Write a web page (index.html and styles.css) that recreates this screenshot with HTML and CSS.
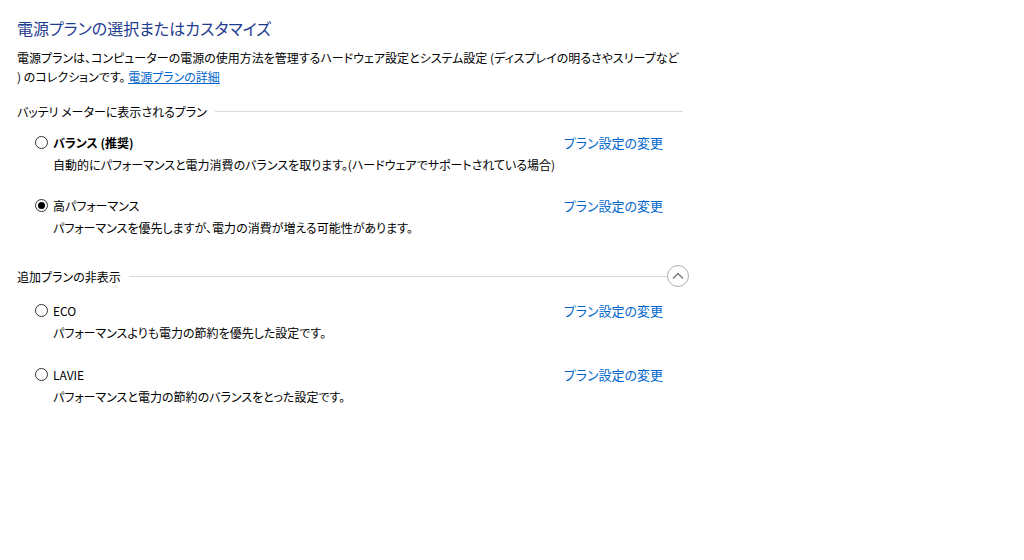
FILE: index.html
```html
<!DOCTYPE html>
<html lang="ja">
<head>
  <meta charset="UTF-8" />
  <title>電源オプション</title>
  <link rel="stylesheet" href="styles.css">
</head>
<body>
<div class="wrap">
  <h1 class="title">電源プランの選択またはカスタマイズ</h1>
  <p class="intro">電源プランは、コンピューターの電源の使用方法を管理するハードウェア設定とシステム設定 (ディスプレイの明るさやスリープなど<br />) のコレクションです。 <a class="link" href="#">電源プランの詳細</a></p>

  <div class="group">
    <div class="group-head"><span>バッテリ メーターに表示されるプラン</span><i class="rule"></i></div>
    <div class="plan">
      <div class="plan-row">
        <span class="radio"></span>
        <span class="plan-name bold">バランス (推奨)</span>
        <a class="link change" href="#">プラン設定の変更</a>
      </div>
      <div class="plan-desc">自動的にパフォーマンスと電力消費のバランスを取ります。(ハードウェアでサポートされている場合)</div>
    </div>
    <div class="plan">
      <div class="plan-row">
        <span class="radio on"></span>
        <span class="plan-name">高パフォーマンス</span>
        <a class="link change" href="#">プラン設定の変更</a>
      </div>
      <div class="plan-desc">パフォーマンスを優先しますが、電力の消費が増える可能性があります。</div>
    </div>
  </div>

  <div class="group extra">
    <div class="group-head"><span>追加プランの非表示</span><i class="rule"></i><span class="toggle"><svg width="12" height="8" viewBox="0 0 12 8"><path d="M1 6.5 6 1.5 11 6.5" fill="none" stroke="#777" stroke-width="1.3"/></svg></span></div>
    <div class="plan">
      <div class="plan-row">
        <span class="radio"></span>
        <span class="plan-name">ECO</span>
        <a class="link change" href="#">プラン設定の変更</a>
      </div>
      <div class="plan-desc">パフォーマンスよりも電力の節約を優先した設定です。</div>
    </div>
    <div class="plan">
      <div class="plan-row">
        <span class="radio"></span>
        <span class="plan-name">LAVIE</span>
        <a class="link change" href="#">プラン設定の変更</a>
      </div>
      <div class="plan-desc">パフォーマンスと電力の節約のバランスをとった設定です。</div>
    </div>
  </div>
</div>
</body>
</html>
```

FILE: styles.css
```css
*{margin: 0;padding: 0;box-sizing: border-box;}
body{background: #fff;color: #000;font: 12px/19px "Noto Sans CJK JP", "Noto Sans", sans-serif;font-feature-settings: "palt";}
.wrap{width: 690px;padding: 16px 0 0 17px;}
.title{font-size: 16px;line-height: 24px;font-weight: normal;color: #1e3c8f;margin-bottom: 8px;}
.intro{width: 672px;}
.link{color: #0066cc;text-decoration: none;}
.intro .link{text-decoration: underline;}
.group{width: 666px;margin-top: 13px;}
.extra{margin-top: 27px;}
.group-head{display: flex;align-items: center;height: 24px;}
.group-head span{white-space: nowrap;}
.rule{flex: 1;border-top: 1px solid #d9d9d9;margin-left: 8px;}
.toggle{width: 22px;height: 22px;border: 1px solid #b0b0b0;border-radius: 50%;display: flex;align-items: center;justify-content: center;margin-right: -6px;}
.plan{padding-left: 18px;margin-top: 9px;}
.plan + .plan{margin-top: 21px;}
.extra .plan{margin-top: 12px;}
.extra .plan + .plan{margin-top: 22px;}
.plan-row{display: flex;align-items: center;height: 20px;}
.radio{width: 13px;height: 13px;border: 1px solid #333;border-radius: 50%;margin-right: 5px;display: flex;align-items: center;justify-content: center;}
.radio.on::after{content: "";width: 7px;height: 7px;border-radius: 50%;background: #000;}
.bold{font-weight: bold;}
.change{margin-left: auto;margin-right: 20px;font-size: 13px;}
.plan-desc{padding-left: 18px;margin-top: 3px;}
```
